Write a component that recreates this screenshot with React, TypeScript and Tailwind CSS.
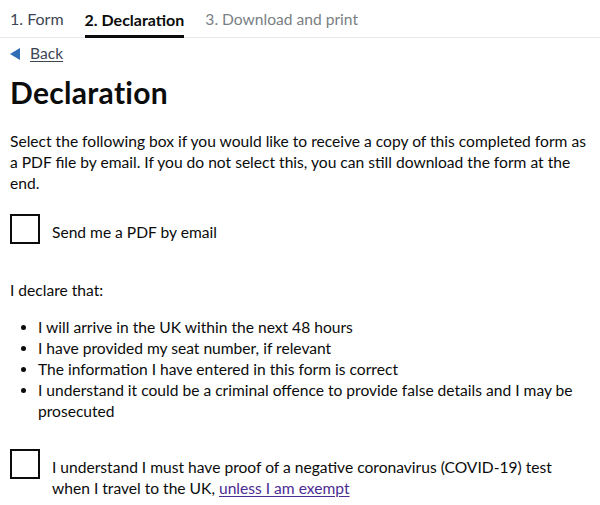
import React from 'react';

const bullets = [
  'I will arrive in the UK within the next 48 hours',
  'I have provided my seat number, if relevant',
  'The information I have entered in this form is correct',
  'I understand it could be a criminal offence to provide false details and I may be prosecuted',
];

const Checkbox: React.FC<{ children: React.ReactNode; className?: string }> = ({ children, className }) => (
  <label className={`flex items-start ${className ?? ''}`}>
    <span className="w-[30px] h-[30px] border-2 border-[#0b0c0c] bg-white shrink-0" />
    <span className="ml-[12px] pt-[8px] leading-[21px]">{children}</span>
  </label>
);

export default function App() {
  return (
    <div className="w-[600px] h-[505px] bg-white text-[#0b0c0c] font-['Lato',sans-serif] text-[15.6px] overflow-hidden">
      <nav className="flex items-end border-b border-[#e8e8e8] h-[38px] px-[10px] gap-[21px] text-[16px]">
        <span className="pb-[6px] text-[#3d4654]">1. Form</span>
        <span className="pb-[3px] font-bold border-b-[3px] border-[#0b0c0c] -mb-[1px]">2. Declaration</span>
        <span className="pb-[6px] text-[#7a7f84] text-[15.6px]">3. Download and print</span>
      </nav>
      <div className="px-[10px]">
        <a className="flex items-center mt-[7px] h-[18px] text-[#3d4654]">
          <svg width="10" height="12" viewBox="0 0 10 12" className="mr-[10px]">
            <polygon points="10,0 10,12 0,6" fill="#2f6db5" />
          </svg>
          <span className="underline underline-offset-2">Back</span>
        </a>
        <h1 className="font-bold text-[30px] leading-[36px] mt-[11px] tracking-[0.3px]">Declaration</h1>
        <p className="mt-[21px] leading-[21px]">
          Select the following box if you would like to receive a copy of this completed form as a PDF file by email. If you do not select this, you can still download the form at the end.
        </p>
        <Checkbox className="mt-[20px]">Send me a PDF by email</Checkbox>
        <p className="mt-[36px] leading-[21px]">I declare that:</p>
        <ul className="mt-[16px] pl-[28px] list-disc leading-[21px]">
          {bullets.map((b) => (
            <li key={b}>{b}</li>
          ))}
        </ul>
        <Checkbox className="mt-[27px]">
          I understand I must have proof of a negative coronavirus (COVID-19) test when I travel to the UK,{' '}
          <a className="text-[#4c2c92] underline underline-offset-2">unless I am exempt</a>
        </Checkbox>
      </div>
    </div>
  );
}
